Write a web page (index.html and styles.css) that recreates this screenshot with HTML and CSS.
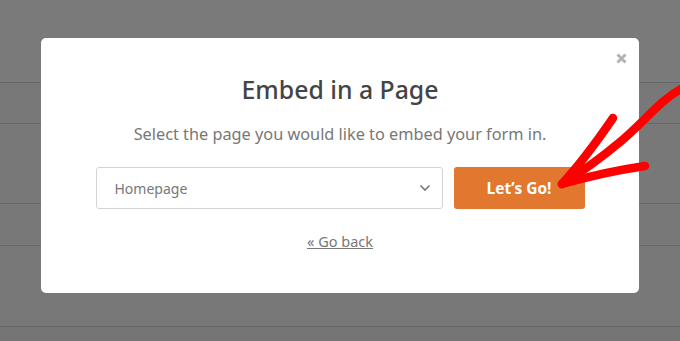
FILE: index.html
```html
<!DOCTYPE html>
<html>
<head>
<meta charset="utf-8">
<link rel="stylesheet" href="styles.css">
</head>
<body>
<div class="page">
  <div class="bg">
    <div class="row r1"></div>
    <div class="row r2"></div>
    <div class="row r3"></div>
    <div class="row r4"></div>
    <div class="row r5"></div>
    <div class="row r6"></div>
  </div>
  <div class="overlay">
    <div class="modal">
      <button class="close" aria-label="Close">
        <svg width="11" height="11" viewBox="0 0 11 11"><path d="M1.5 1.5 L9.5 9.5 M9.5 1.5 L1.5 9.5" stroke="#b4b4b4" stroke-width="3" stroke-linecap="butt"/></svg>
      </button>
      <h2 class="title">Embed in a Page</h2>
      <p class="subtitle">Select the page you would like to embed your form in.</p>
      <div class="controls">
        <div class="select">
          <span class="select-text">Homepage</span>
          <svg class="chev" width="12" height="8" viewBox="0 0 12 8"><path d="M1.5 1.5 L6 6 L10.5 1.5" fill="none" stroke="#777" stroke-width="1.6"/></svg>
        </div>
        <button class="go">Let’s Go!</button>
      </div>
      <a class="back" href="#">« Go back</a>
    </div>
  </div>
  <svg class="arrow" width="680" height="341" viewBox="0 0 680 341">
    <g fill="none" stroke="#ff0000" stroke-width="8.5" stroke-linecap="round" stroke-linejoin="round">
      <path d="M686 86 C662 98 645 121 620 142 C602 157 585 170 562 184"/>
      <path d="M613 118 C600 137 582 162 562 184"/>
      <path d="M645 166 C618 170 590 176 562 184"/>
    </g>
  </svg>
</div>
</body>
</html>
```
FILE: styles.css
```css
* { box-sizing: border-box; }
html, body { margin: 0; padding: 0; }
body {
  width: 680px;
  height: 341px;
  overflow: hidden;
  font-family: "Noto Sans", "Open Sans", sans-serif;
  background: #777;
}
.page {
  position: relative;
  width: 680px;
  height: 341px;
}
.bg {
  display: flex;
  flex-direction: column;
  height: 341px;
  background: #787878;
}
.row { border-bottom: 1px solid #676767; }
.r1 { height: 83px; background: #7a7a7a; }
.r2 { height: 41px; }
.r3 { height: 80px; }
.r4 { height: 42px; }
.r5 { height: 81px; }
.r6 { flex: 1; border-bottom: none; background: #757575; }

.overlay {
  position: absolute;
  inset: 0;
  padding: 38px 0 0 41px;
}
.modal {
  position: relative;
  width: 598px;
  height: 255px;
  background: #fff;
  border-radius: 5px;
  display: flex;
  flex-direction: column;
  align-items: center;
  padding-top: 34px;
}
.close {
  position: absolute;
  top: 15px;
  right: 12px;
  border: 0;
  background: none;
  padding: 0;
  width: 11px;
  height: 11px;
  display: flex;
}
.title {
  margin: 0;
  font-size: 24.8px;
  line-height: 34px;
  font-weight: 500;
  color: #444;
}
.subtitle {
  margin: 17px 0 0;
  font-size: 16.3px;
  line-height: 22px;
  color: #777;
}
.controls {
  margin-top: 22px;
  display: flex;
  gap: 11px;
}
.select {
  width: 347px;
  height: 42px;
  border: 1px solid #d4d4d4;
  border-radius: 3px;
  display: flex;
  align-items: center;
  justify-content: space-between;
  padding: 0 11px 0 18px;
}
.select-text {
  font-size: 14px;
  color: #777;
}
.go {
  width: 131px;
  height: 42px;
  border: 0;
  border-radius: 3px;
  background: #e27730;
  color: #fff;
  font-family: "Open Sans", "Noto Sans", sans-serif;
  font-weight: 700;
  font-size: 15.5px;
  padding: 0;
}
.back {
  margin-top: 22px;
  font-size: 14.5px;
  color: #777;
  text-decoration: underline;
}
.arrow {
  position: absolute;
  left: 0;
  top: 0;
  pointer-events: none;
}
```
